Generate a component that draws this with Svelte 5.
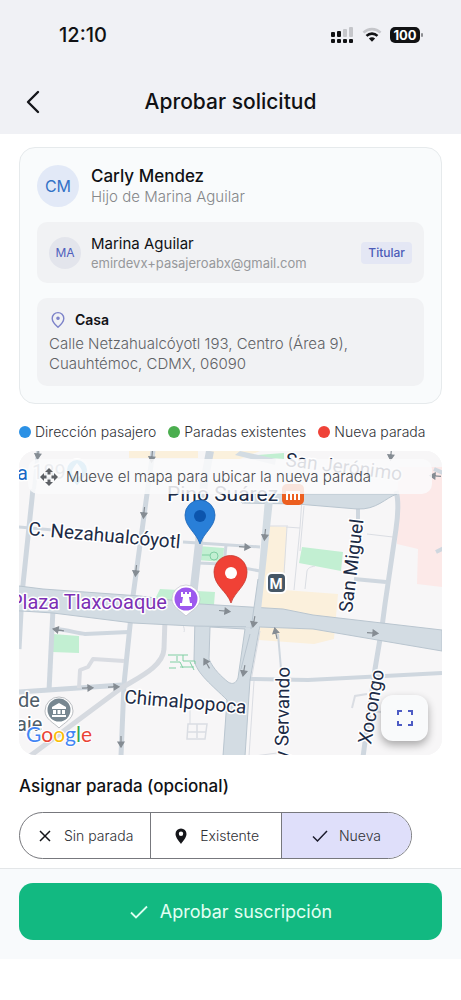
<script lang="ts">
  let stop = $state('nueva');
  const legend = [
    { tone: 'blue', label: 'Dirección pasajero' },
    { tone: 'green', label: 'Paradas existentes' },
    { tone: 'red', label: 'Nueva parada' }
  ];
  const options = [
    { id: 'ninguna', label: 'Sin parada' },
    { id: 'existente', label: 'Existente' },
    { id: 'nueva', label: 'Nueva' }
  ];
  // Direction arrows of one-way streets: x, y, rotation
  const arrows = [
    [144, 513, 96], [136, 571, 96], [265, 535, 96], [244, 548, 4], [224, 612, 6],
    [254, 622, 100], [244, 671, 100], [276, 635, -102], [372, 634, 4], [59, 631, -170],
    [87, 689, -2], [113, 688, -2], [121, 742, 90], [207, 665, -120], [38, 454, 95],
    [152, 457, 95], [391, 455, 95], [436, 477, 184]
  ];
</script>

<div class="screen">
  <header>
    <div class="status">
      <span class="time">12:10</span>
      <div class="indicators">
        <svg width="24" height="18" viewBox="0 0 24 18" aria-hidden="true">
          <g fill="#c5c6ca"><rect x="13" y="3" width="4" height="8" rx="1" /><rect x="19" y="1" width="4" height="10" rx="1" /></g>
          <g fill="#111214"><rect x="1" y="6" width="4" height="5" rx="1" /><rect x="7" y="5" width="4" height="6" rx="1" /><rect x="1" y="13" width="4" height="4" rx="1" /><rect x="7" y="13" width="4" height="4" rx="1" /><rect x="13" y="13" width="4" height="4" rx="1" /><rect x="19" y="13" width="4" height="4" rx="1" /></g>
        </svg>
        <svg width="20" height="16" viewBox="0 0 20 16" fill="none" aria-hidden="true">
          <path d="M1.500 5.600C6.300.9 13.700.9 18.500 5.600" stroke="#c5c6ca" stroke-width="2.600" />
          <path d="M4.500 8.900c3.200-3 7.800-3 11 0" stroke="#111214" stroke-width="2.600" />
          <path d="M6.900 11.500c1.800-1.600 4.400-1.600 6.200 0L10 14.800z" fill="#111214" />
        </svg>
        <span class="battery">100</span>
      </div>
    </div>
    <div class="titlebar">
      <button class="back" aria-label="Volver">
        <svg width="14" height="24" viewBox="0 0 14 24" fill="none" stroke="#15161a" stroke-width="2.400" stroke-linecap="round" stroke-linejoin="round"><path d="M12 2 2 12l10 10" /></svg>
      </button>
      <h1>Aprobar solicitud</h1>
    </div>
  </header>

  <main>
    <section class="card">
      <div class="person">
        <span class="avatar">CM</span>
        <div class="names">
          <strong>Carly Mendez</strong>
          <span>Hijo de Marina Aguilar</span>
        </div>
      </div>
      <div class="panel holder">
        <span class="avatar small">MA</span>
        <div class="names">
          <strong>Marina Aguilar</strong>
          <span>emirdevx+pasajeroabx@gmail.com</span>
        </div>
        <span class="badge">Titular</span>
      </div>
      <div class="panel address">
        <div class="place">
          <svg width="18" height="18" viewBox="0 0 18 18" fill="none" stroke="#7d83c9" stroke-width="1.400" stroke-linejoin="round" aria-hidden="true"><path d="M9 16.300C6.500 14 3.200 10.900 3.200 7.400a5.800 5.800 0 0 1 11.600 0c0 3.500-3.300 6.600-5.800 8.900z" /><circle cx="9" cy="7.300" r="1.100" fill="#7d83c9" /></svg>
          <strong>Casa</strong>
        </div>
        <p>Calle Netzahualcóyotl 193, Centro (Área 9), Cuauhtémoc, CDMX, 06090</p>
      </div>
    </section>

    <ul class="legend">
      {#each legend as item}
        <li><i class={item.tone}></i>{item.label}</li>
      {/each}
    </ul>

    <section class="map">
      <svg class="streets" viewBox="19 452 423 304" preserveAspectRatio="xMidYMid slice" role="img" aria-label="Mapa">
        <rect x="0" y="440" width="470" height="330" fill="#f7f6f7" />
        <path fill="#fbf0dc" d="M129 452h69v7h-69zM262 590l8-63 17 1-3 63 54 4-4 45-20 5-55-4z" />
        <path fill="#fbf1dd" d="M210 452h50l-20 8h-30z" />
        <path fill="#fce9e8" d="M398 468h44v120l-25-3 1-35-21-5z" />
        <path fill="#c2efd2" d="M302 548l41 5-2 19-42-8zM198 547l26 2-1 14-26-2zM53 635l26 2v17l-27-1zM160 590l55 3-1 13-60-4zM244 457l40-3v6z" />
        <g fill="none" stroke="#dadde3" stroke-width="1">
          <path d="M286 528l14 1 4-60M300 529l-6 62M287 528l-4 62M304 507l-4 45M367 535l26 3M305 590l2-18c1-3 3-4 8-5M190 711v14M185 615c-6 8 1 14-1 18M270 527h18M247 758l30-4" />
          <path d="M260 632l-9 50M254 682l-5 75" />
          <path d="M188 725h19l-2 15h-18zM187 733h19M197 725v14" stroke-width="1.500" />
          <path d="M352 709l3-12 12-2M371 712l10 1" stroke-width="2" />
        </g>
        <g fill="none" stroke="#cfd7df" stroke-linejoin="round">
          <path d="M33 490L22 595 19 650" stroke-width="5" />
          <path d="M38 452L34 490" stroke-width="4" />
          <path d="M153 452L147 495 133 597 131 617 124 685 121 757" stroke-width="5" />
          <path d="M18 528l35 3M183 543l77 5M226 546l-2 20M198 564l24 1 38 7" stroke-width="3" />
          <path d="M210 452l-6 32-5 60-7 62" stroke-width="8" />
          <path d="M53 610L49 692" stroke-width="5" />
          <path d="M19 693L122 686" stroke-width="5" />
          <path d="M57 630c10 1 20 4 28 5l44-2" stroke-width="4" />
          <path d="M79 689l1-18 8-3 5-8 31 2" stroke-width="4" stroke="#d9dce2" />
          <path d="M165 620l-1 30c-1 18-27 29-44 40L30 757" stroke-width="5" stroke="#d6dae0" />
          <path d="M250 680l58 1 134-7" stroke-width="4" />
          <path d="M278 635l3 35" stroke-width="2" />
          <path d="M358 498v22M354 580l32 3" stroke-width="4" />
          <path d="M396 492c3 10 2 24 0 38L385 605 382 628M380 640l-5 30-12 88" stroke-width="5" />
          <path d="M434 470l9 4M436 553l8-4" stroke-width="4" />
        </g>
        <g fill="#d3dce3" stroke="#b9c5cf" stroke-width="1">
          <path fill-rule="evenodd" d="M195 618L194 661C197 675 212 686 227 701L223 757H245L250 681L260 626ZM210 628L209 660C213 670 222 678 228 683C233 686 236 684 238 679L245 630Z" />
          <path d="M19 587l24 3 97 7 60 8 83 5 30 6 129 15v21l-129-22-53-2-67-1-60-3-80-10-94-6z" />
          <path d="M235 495h162c-12 4-20 16-40 15l-60-5-55-1z" />
          <path d="M265 500l8 1-14 129h-8l7-50z" stroke="none" />
          <path d="M240 452l36 8-1 6-40-10z" stroke="none" />
        </g>
        <path d="M197 621h12M246 627h13M196 608h12" stroke="#d3dce3" stroke-width="3" />
        <path d="M250 635l-9 35M258 580l-7 50" fill="none" stroke="#b9c5cf" />
        <path d="M202 556h11M168 656h20M170 663h10l3 6M169 669h7M183 656v6h12v3M177 657v5M180 668h14M190 663l4 8" fill="none" stroke="#80cfa3" stroke-width="1" />
        <circle cx="214" cy="557" r="4" fill="#c2efd2" stroke="#80cfa3" />
        {#each arrows as [x, y, turn]}
          <path transform="translate({x} {y}) rotate({turn})" d="M-5 0H2M1-3l5 3-5 3z" fill="#858c93" stroke="#858c93" stroke-width="1.200" />
        {/each}
        <path d="M77 488c-5-7-11-10-11-17a11 11 0 0 1 22 0c0 7-6 10-11 17z" fill="#66b7e2" stroke="#fff" stroke-width="2" />
        <path d="M77 464c3 4 5 6 5 9a5 5 0 0 1-10 0c0-3 2-5 5-9z" fill="#fff" />
        <g class="labels">
          <text x="17" y="481" class="blue-label">a</text>
          <text x="32" y="480" class="muted-label">189</text>
          <text transform="translate(285 467) rotate(7)">San Jerónimo</text>
          <text x="167" y="502" class="place-label">Pino Suárez</text>
          <text transform="translate(28 536) rotate(5)">C. Nezahualcóyotl</text>
          <text transform="translate(124 704) rotate(5)">Chimalpopoca</text>
          <text transform="translate(352 614) rotate(-83)">San Miguel</text>
          <text transform="translate(288 761) rotate(-89)">y Servando</text>
          <text transform="translate(371 746) rotate(-80)">Xocongo</text>
          <text x="10" y="610" class="purple-label">Plaza Tlaxcoaque</text>
          <text x="18" y="708" class="gray-label">de</text>
          <text x="16" y="732" class="gray-label">aje</text>
        </g>
        <rect x="282" y="485" width="22" height="21" rx="5" fill="#ec5f20" />
        <path d="M286 492h14v9h-2v-6h-2v6h-2v-6h-2v6h-2v-6h-2v6h-2z" fill="#fff" />
        <rect x="267" y="574" width="19" height="20" rx="5" fill="#465766" stroke="#fff" stroke-width="2" />
        <text x="276" y="590" text-anchor="middle" class="metro">M</text>
        <g>
          <path d="M186 617c-5-5-14-9-14-17a14 14 0 0 1 28 0c0 8-9 12-14 17z" fill="#fff" stroke="#b8b8c2" stroke-width=".6" />
          <circle cx="186" cy="600" r="11.500" fill="#9d58ee" />
          <path d="M181 593h2v2h2v-2h2v2h2v-2h2v5h-2l1 6h2v3h-12v-3h2l1-6h-2z" fill="#fff" />
          <path d="M59 729c-5-5-14-9-14-17a14 14 0 0 1 28 0c0 8-9 12-14 17z" fill="#fff" stroke="#a9adb3" stroke-width=".8" />
          <circle cx="59" cy="711" r="11.500" fill="#778791" />
          <path d="M59 704l7 4v2H52v-2zM53 711h3v4h-3zM62 711h3v4h-3zM52 716h14v2H52zM57.500 711h3v4h-3z" fill="#fff" />
        </g>
        <path d="M200 545c-4-12-15-17-15-29a15 15 0 0 1 30 0c0 12-11 17-15 29z" fill="#297fd8" stroke="#1c65b6" stroke-width=".8" />
        <circle cx="200" cy="517" r="6" fill="#0c55ad" />
        <path d="M231 604c-4-12-17-17-17-31a16.500 16.500 0 0 1 33 0c0 14-12 19-16 31z" fill="#f04136" stroke="#c6382f" stroke-width=".8" />
        <circle cx="231" cy="574" r="6" fill="#fff" />
        <text x="26" y="743" class="google"><tspan fill="#4285f4">G</tspan><tspan fill="#ea4335">o</tspan><tspan fill="#fbbc05">o</tspan><tspan fill="#4285f4">g</tspan><tspan fill="#34a853">l</tspan><tspan fill="#ea4335">e</tspan></text>
      </svg>
      <div class="hint">
        <svg width="18" height="18" viewBox="0 0 18 18" aria-hidden="true"><path fill="#5d6065" d="M9 0l4 4h-2.500v2.500h-3V4H5zM9 18l4-4h-2.500v-2.500h-3V14H5zM0 9l4-4v2.500h2.500v3H4V13zM18 9l-4-4v2.500h-2.500v3H14V13z" /></svg>
        <span>Mueve el mapa para ubicar la nueva parada</span>
      </div>
      <button class="expand" aria-label="Pantalla completa">
        <svg width="16" height="16" viewBox="0 0 16 16" fill="none" stroke="#4d5bc4" stroke-width="2"><path d="M1 5V1h4M11 1h4v4M15 11v4h-4M5 15H1v-4" /></svg>
      </button>
    </section>

    <fieldset>
      <legend>Asignar parada (opcional)</legend>
      <div class="segments">
        {#each options as option}
          <label class:selected={stop === option.id}>
            <input type="radio" name="parada" value={option.id} bind:group={stop} />
            {#if stop === option.id}
              <svg width="16" height="16" viewBox="0 0 16 16" fill="none" stroke="#1b1b2b" stroke-width="1.500"><path d="M1 8.500l4.500 4.500L15 3" /></svg>
            {:else if option.id === 'existente'}
              <svg width="16" height="16" viewBox="0 0 16 16"><path fill="#15161a" fill-rule="evenodd" d="M8 16C6 13 2.500 9.500 2.500 6a5.500 5.500 0 0 1 11 0c0 3.500-3.500 7-5.500 10zM8 3.600a2.200 2.200 0 1 0 0 4.400 2.200 2.200 0 0 0 0-4.400z" /></svg>
            {:else}
              <svg width="16" height="16" viewBox="0 0 16 16" fill="none" stroke="#15161a" stroke-width="1.500"><path d="M3 3l10 10M13 3L3 13" /></svg>
            {/if}
            <span>{option.label}</span>
          </label>
        {/each}
      </div>
    </fieldset>
  </main>

  <footer>
    <button class="approve">
      <svg width="20" height="16" viewBox="0 0 20 16" fill="none" stroke="#d9fff0" stroke-width="1.800" aria-hidden="true"><path d="M2 8.500L7 13.500 18 2.500" /></svg>
      Aprobar suscripción
    </button>
  </footer>
</div>

<style>
  :global(body) { margin: 0; background: #fff; }
  .screen { min-height: 100vh; font-family: Inter, "Liberation Sans", sans-serif; color: #101114; background: #fff; }
  .screen * { box-sizing: border-box; }
  button { font: inherit; cursor: pointer; border: 0; }
  svg { display: block; flex: none; }
  header { background: #f0f1f5; }
  .status { display: flex; align-items: center; justify-content: space-between; height: 69px; padding: 0 41px 0 59px; }
  .time { font-size: 20px; font-weight: 500; }
  .indicators { display: flex; align-items: center; gap: 8px; }
  .battery { position: relative; display: grid; place-items: center; width: 30px; height: 16px; border-radius: 5px; background: #111214; color: #fff; font-size: 13px; font-weight: 700; }
  .battery::after { content: ""; position: absolute; right: -3px; top: 6px; width: 2px; height: 4px; border-radius: 1px; background: #8d8e92; }
  .titlebar { display: grid; grid-template-columns: 44px 1fr 44px; align-items: center; height: 65px; padding: 0 11px; }
  .back { display: grid; place-items: center; height: 44px; padding: 0; background: none; }
  h1 { margin: 0; text-align: center; font-size: 21px; font-weight: 500; }
  main { display: flex; flex-direction: column; padding: 13px 19px 9px; }
  .card { display: flex; flex-direction: column; gap: 15px; padding: 17px; border: 1px solid #e6eaec; border-radius: 16px; background: #f9fbfc; }
  .person { display: flex; align-items: center; gap: 12px; }
  .avatar { display: grid; place-items: center; flex: none; width: 42px; height: 42px; border-radius: 50%; background: #e2e9f7; color: #3472c6; font-size: 16px; }
  .avatar.small { width: 32px; height: 32px; background: #e3e5ec; color: #4f5fbd; font-size: 12px; }
  .names { display: flex; flex-direction: column; min-width: 0; flex: 1; }
  .person strong { font-size: 17px; line-height: 22px; font-weight: 500; }
  .person .names span { font-size: 15px; line-height: 20px; font-weight: 300; color: #85878a; }
  .panel { border-radius: 10px; background: #f1f2f4; padding: 12px; }
  .holder { display: flex; align-items: center; gap: 10px; height: 61px; }
  .holder strong { font-size: 15px; line-height: 20px; font-weight: 400; }
  .holder .names span { font-size: 13px; line-height: 18px; color: #96989b; }
  .badge { padding: 0 7px; border-radius: 4px; background: #e4e7f4; color: #4c5cb8; font-size: 12px; line-height: 22px; font-weight: 500; }
  .place { display: flex; align-items: center; gap: 8px; }
  .place strong { font-size: 14px; line-height: 20px; font-weight: 600; }
  .address p { margin: 4px 0 0; font-size: 15px; line-height: 20px; font-weight: 300; color: #606266; }
  .legend { display: flex; gap: 12px; margin: 19px 0 10px; padding: 0; list-style: none; font-size: 14px; line-height: 18px; font-weight: 300; color: #303236; white-space: nowrap; }
  .legend li { display: flex; align-items: center; gap: 4px; }
  .legend i { width: 12px; height: 12px; border-radius: 50%; }
  .blue { background: #2b91e5; }
  .green { background: #4bae4f; }
  .red { background: #ef4238; }
  .map { position: relative; height: 304px; overflow: hidden; border-radius: 16px; background: #f7f6f7; }
  .streets { width: 100%; height: 100%; }
  .labels text { font-family: Roboto, sans-serif; font-size: 19px; fill: #1c2b46; stroke: #fff; stroke-width: 3px; paint-order: stroke; stroke-linejoin: round; }
  .labels .place-label { font-size: 21px; }
  .labels .purple-label { font-size: 20px; fill: #7b2fb4; }
  .labels .gray-label { font-size: 20px; fill: #4f5d68; }
  .labels .blue-label { font-size: 20px; fill: #1768c5; }
  .labels .muted-label { font-size: 20px; fill: #8995a3; }
  .metro { font-family: Roboto, sans-serif; font-size: 15px; font-weight: 700; fill: #fff; }
  .google { font-family: Lato, sans-serif; font-size: 21px; font-weight: 400; stroke: #fff; stroke-width: 2px; paint-order: stroke; }
  .hint { position: absolute; inset: 8px 10px auto 9px; display: flex; align-items: center; gap: 8px; height: 35px; padding: 0 12px; border-radius: 10px; background: rgb(250 250 251 / 86%); font-size: 15px; font-weight: 300; color: #4a4c51; white-space: nowrap; }
  .expand { position: absolute; right: 14px; bottom: 14px; display: grid; place-items: center; width: 47px; height: 46px; border-radius: 12px; background: #f9fafb; box-shadow: 0 4px 8px rgb(0 0 0 / 32%); }
  fieldset { min-width: 0; margin: 20px 0 0; padding: 0; border: 0; }
  legend { padding: 0; font-size: 17px; line-height: 22px; font-weight: 500; }
  .segments { display: inline-grid; grid-auto-flow: column; grid-auto-columns: 1fr; margin-top: 15px; height: 47px; overflow: hidden; border: 1px solid #77787d; border-radius: 24px; vertical-align: top; }
  label { position: relative; display: flex; align-items: center; justify-content: center; gap: 11px; padding: 0 17px; font-size: 14px; font-weight: 300; color: #303136; cursor: pointer; }
  label + label { border-left: 1px solid #77787d; }
  label.selected { background: #dfdffa; }
  input { position: absolute; inset: 0; margin: 0; opacity: 0; cursor: pointer; }
  footer { padding: 14px 19px 19px; border-top: 1px solid #e3e6e8; background: #f8fafc; }
  .approve { display: flex; align-items: center; justify-content: center; gap: 11px; width: 100%; height: 57px; border-radius: 14px; background: #12b981; color: #e2fff3; font-size: 18px; font-weight: 400; }
</style>
